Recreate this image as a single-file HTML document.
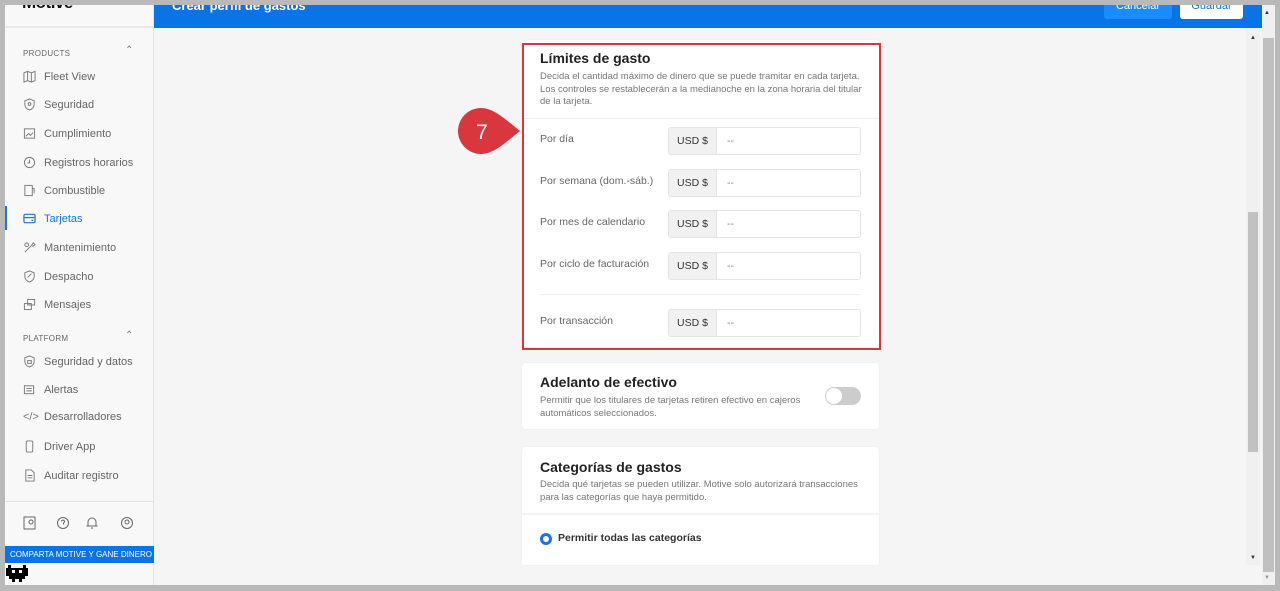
<!DOCTYPE html>
<html><head><meta charset="utf-8"><style>
*{box-sizing:border-box;margin:0;padding:0}
body{width:1280px;height:591px;background:#b9b9b9;font-family:"Liberation Sans",sans-serif;position:relative;overflow:hidden}
.abs{position:absolute}
#side{left:5px;top:0;width:149px;height:585px;background:#f8f8f8;border-right:1px solid #e4e4e4}
.logo{left:0;top:0;width:149px;height:28px;border-bottom:2px solid #e8e8e8}
.sec{font-size:8px;color:#666;left:18px;letter-spacing:.3px}
.car{left:120px;font-size:10px;color:#777}
.it{left:18px;font-size:11px;color:#666;display:flex;align-items:center;gap:8px}
.ic{width:13px;height:13px;display:inline-block}
#main{left:154px;top:28px;width:1108px;height:557px;background:#f5f5f5}
#hdr{left:154px;top:5px;width:1108px;height:23px;background:#0a73e6}
.card{background:#fff;border-radius:4px;position:absolute;left:522px;width:357px;box-shadow:0 0 1px #ddd}
.h{font-size:14px;color:#222;font-weight:bold;position:absolute;left:18px}
.d{font-size:9.5px;color:#777;line-height:12.5px;position:absolute;left:18px;width:325px}
.lbl{position:absolute;left:540px;font-size:10.5px;color:#666}
.inp{position:absolute;left:668px;width:193px;height:28px;border:1px solid #e4e4e4;border-radius:3px;background:#fff;font-size:10.5px;color:#888}
.inp b{font-weight:normal;display:inline-block;width:48px;height:26px;background:#f1f1f1;border-right:1px solid #e4e4e4;color:#333;text-align:center;line-height:26px}
.inp span{position:absolute;left:58px;top:7px}
</style></head><body>
<div id="hdr" class="abs"><div class="abs" style="left:18px;top:-7px;color:#fff;font-size:13px;font-weight:bold">Crear perfil de gastos</div>
<div class="abs" style="left:950px;top:-5px;width:68px;height:19px;background:#1a8cff;border-radius:3px;color:#fff;font-size:11px;text-align:center;line-height:12px">Cancelar</div>
<div class="abs" style="left:1026px;top:-5px;width:63px;height:19px;background:#fff;border-radius:3px;color:#0a73e6;font-size:11px;text-align:center;line-height:12px">Guardar</div></div>
<div id="main" class="abs"></div>
<div class="abs" style="left:1262px;top:5px;width:13px;height:580px;background:#f0f0f0"></div>
<div class="abs" style="left:1263px;top:38px;width:11px;height:534px;background:#c0c0c0"></div>
<div class="abs" style="left:1264px;top:10px;font-size:6px;color:#333">▲</div>
<div class="abs" style="left:1264px;top:575px;font-size:6px;color:#999">▼</div>
<div class="abs" style="left:1246px;top:28px;width:14px;height:537px;background:#f0f0f0"></div>
<div class="abs" style="left:1248px;top:212px;width:10px;height:240px;background:#c1c1c1"></div>
<div class="abs" style="left:1250px;top:35px;font-size:6px;color:#333">▲</div>
<div class="abs" style="left:1250px;top:555px;font-size:6px;color:#333">▼</div>
<div id="side" class="abs">
<div class="logo abs"><div class="abs" style="left:17px;top:-7px;font-size:17px;font-weight:900;color:#111;letter-spacing:-.5px">Motive</div></div>
<div class="sec abs" style="top:49px">PRODUCTS</div><div class="car abs" style="top:45px">⌃</div>
<div class="it abs" style="top:70px"><svg class="ic" viewBox="0 0 14 14" fill="none" stroke="#777"><path d="M1 3l4-1.5 4 1.5 4-1.5v10l-4 1.5-4-1.5-4 1.5z M5 1.5v10 M9 3v10"/></svg>Fleet View</div>
<div class="it abs" style="top:98px"><svg class="ic" viewBox="0 0 14 14" fill="none" stroke="#777"><path d="M7 1l5 2v4c0 3-2.5 5-5 6-2.5-1-5-3-5-6V3z"/><circle cx="7" cy="6.5" r="1.5"/></svg>Seguridad</div>
<div class="it abs" style="top:127px"><svg class="ic" viewBox="0 0 14 14" fill="none" stroke="#777"><rect x="1.5" y="2" width="11" height="10"/><path d="M3 10l3-3 2 2 3-3"/></svg>Cumplimiento</div>
<div class="it abs" style="top:156px"><svg class="ic" viewBox="0 0 14 14" fill="none" stroke="#777"><circle cx="7" cy="7" r="5.5"/><path d="M7 4v3.5H4.5"/></svg>Registros horarios</div>
<div class="it abs" style="top:184px"><svg class="ic" viewBox="0 0 14 14" fill="none" stroke="#777"><rect x="2" y="1.5" width="8" height="11"/><path d="M10 5h2v5"/></svg>Combustible</div>
<div class="abs" style="left:0;top:206px;width:2px;height:24px;background:#1a73e8"></div>
<div class="it abs" style="top:212px;color:#1a73e8"><svg class="ic" viewBox="0 0 14 14" fill="none" stroke="#1a73e8" stroke-width="1.3"><rect x="1" y="2.5" width="12" height="9" rx="1.5"/><path d="M1 6h12"/><path d="M9 9h2"/></svg>Tarjetas</div>
<div class="it abs" style="top:241px"><svg class="ic" viewBox="0 0 14 14" fill="none" stroke="#777"><path d="M2 12l3-3 M5 9l4-4 M9 5l2-3 2 2-3 2"/><circle cx="4" cy="4" r="2"/></svg>Mantenimiento</div>
<div class="it abs" style="top:270px"><svg class="ic" viewBox="0 0 14 14" fill="none" stroke="#777"><path d="M7 1l5 2v4c0 3-2.5 5-5 6-2.5-1-5-3-5-6V3z"/><path d="M5 8l4-4"/></svg>Despacho</div>
<div class="it abs" style="top:298px"><svg class="ic" viewBox="0 0 14 14" fill="none" stroke="#777"><rect x="5" y="1.5" width="7.5" height="6"/><rect x="1.5" y="6" width="7.5" height="6.5"/></svg>Mensajes</div>
<div class="sec abs" style="top:334px">PLATFORM</div><div class="car abs" style="top:330px">⌃</div>
<div class="it abs" style="top:355px"><svg class="ic" viewBox="0 0 14 14" fill="none" stroke="#777"><path d="M7 1l5 2v4c0 3-2.5 5-5 6-2.5-1-5-3-5-6V3z"/><rect x="5" y="6" width="4" height="3"/></svg>Seguridad y datos</div>
<div class="it abs" style="top:383px"><svg class="ic" viewBox="0 0 14 14" fill="none" stroke="#777"><rect x="1.5" y="3" width="10" height="8.5"/><path d="M3.5 6h6M3.5 8.5h6"/></svg>Alertas</div>
<div class="it abs" style="top:411px"><span style="font-size:11px;color:#777;width:13px">&lt;/&gt;</span>Desarrolladores</div>
<div class="it abs" style="top:440px"><svg class="ic" viewBox="0 0 14 14" fill="none" stroke="#777"><rect x="3.5" y="1" width="7" height="12" rx="1.5"/></svg>Driver App</div>
<div class="it abs" style="top:469px"><svg class="ic" viewBox="0 0 14 14" fill="none" stroke="#777"><path d="M3 1h6l3 3v9H3z M5 7h5M5 9.5h5"/></svg>Auditar registro</div>
<div class="abs" style="left:0;top:501px;width:149px;height:1px;background:#e2e2e2"></div>
<svg class="abs" style="left:18px;top:516px" width="120" height="14" viewBox="0 0 120 14" fill="none" stroke="#666"><rect x="1" y="1" width="11" height="12"/><circle cx="8" cy="6" r="2"/><circle cx="40" cy="7" r="5.5"/><path d="M38.5 5.5a1.5 1.5 0 1 1 2 1.5v1.5"/><path d="M65 10V6a4 4 0 0 1 8 0v4h1.5h-11z M68 12h2"/><circle cx="104" cy="7" r="5.5"/><circle cx="104" cy="6" r="2"/></svg>
<div class="abs" style="left:0;top:546px;width:149px;height:17px;background:#0a73e6;color:#fff;font-size:8px;line-height:17px;padding-left:5px">COMPARTA MOTIVE Y GANE DINERO ?</div>
<svg class="abs" style="left:1px;top:565px" width="22" height="17" viewBox="0 0 22 17" fill="#000"><path d="M2 0h3v3h12V0h3v3h2v8h-3v3h-3v3h-3v-3H9v3H6v-3H3v-3H0V3h2z"/><rect x="6" y="5" width="3" height="3" fill="#fff"/><rect x="13" y="5" width="3" height="3" fill="#fff"/></svg>
</div>
<div class="abs" style="left:0;top:0;width:1280px;height:5px;background:#b9b9b9"></div>
<div class="card" style="top:40px;height:307px">
<div class="h" style="top:10px">Límites de gasto</div>
<div class="d" style="top:31px">Decida el cantidad máximo de dinero que se puede tramitar en cada tarjeta. Los controles se restablecerán a la medianoche en la zona horaria del titular de la tarjeta.</div>
<div class="abs" style="left:0;top:78px;width:357px;height:1px;background:#eee"></div>
<div class="abs" style="left:18px;top:254px;width:320px;height:1px;background:#eee"></div>
</div>
<div class="lbl" style="top:133px">Por día</div><div class="inp" style="top:127px"><b>USD $</b><span>--</span></div>
<div class="lbl" style="top:175px">Por semana (dom.-sáb.)</div><div class="inp" style="top:169px"><b>USD $</b><span>--</span></div>
<div class="lbl" style="top:216px">Por mes de calendario</div><div class="inp" style="top:210px"><b>USD $</b><span>--</span></div>
<div class="lbl" style="top:258px">Por ciclo de facturación</div><div class="inp" style="top:252px"><b>USD $</b><span>--</span></div>
<div class="lbl" style="top:315px">Por transacción</div><div class="inp" style="top:309px"><b>USD $</b><span>--</span></div>
<div class="abs" style="left:522px;top:43px;width:359px;height:307px;border:2px solid #d9363e"></div>
<svg class="abs" style="left:456px;top:106px" width="66" height="50" viewBox="0 0 66 50"><path d="M25 2A23 23 0 1 0 25 48C38 48 50 36 64 25C50 14 38 2 25 2Z" fill="#d9363e"/><text x="26" y="33" font-family="Liberation Sans" font-size="21" fill="#fff" text-anchor="middle">7</text></svg>
<div class="card" style="top:363px;height:66px">
<div class="h" style="top:11px">Adelanto de efectivo</div>
<div class="d" style="top:32px;width:280px">Permitir que los titulares de tarjetas retiren efectivo en cajeros automáticos seleccionados.</div>
<div class="abs" style="left:303px;top:24px;width:36px;height:18px;border-radius:9px;background:#ccc"><div class="abs" style="left:1px;top:1px;width:16px;height:16px;border-radius:8px;background:#fff"></div></div>
</div>
<div class="card" style="top:447px;height:118px;border-radius:4px 4px 0 0">
<div class="h" style="top:12px">Categorías de gastos</div>
<div class="d" style="top:32px">Decida qué tarjetas se pueden utilizar. Motive solo autorizará transacciones para las categorías que haya permitido.</div>
<div class="abs" style="left:0;top:66px;width:357px;height:2px;background:#f3f3f3"></div>
<div class="abs" style="left:18px;top:86px;width:12px;height:12px;border-radius:6px;border:3px solid #1a73e8"></div>
<div class="abs" style="left:36px;top:85px;font-size:10.5px;font-weight:bold;color:#333">Permitir todas las categorías</div>
</div>
</body></html>
